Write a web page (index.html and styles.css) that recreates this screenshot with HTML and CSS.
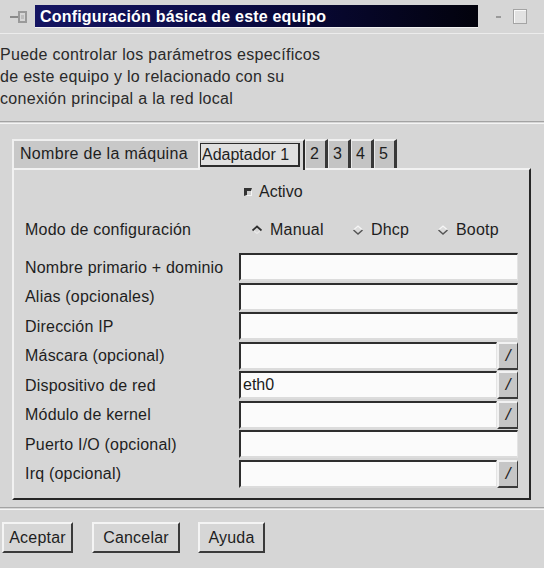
FILE: index.html
```html
<!DOCTYPE html>
<html lang="es">
<head>
<meta charset="utf-8">
<title>Configuración básica de este equipo</title>
<link rel="stylesheet" href="styles.css">
</head>
<body>
<div class="window">
  <div class="titlebar">
    <div class="menu-icon">
      <svg width="20" height="14" viewBox="0 0 20 14"><path d="M1 7h8" stroke="#8a8a8a" stroke-width="2"/><path d="M10 2h7v10h-7z" fill="none" stroke="#9a9a9a" stroke-width="2"/><path d="M12 5h3v4h-3z" fill="#bdbdbd"/></svg>
    </div>
    <div class="title">Configuración básica de este equipo</div>
    <div class="controls">
      <span class="minimize"></span>
      <span class="maximize"></span>
    </div>
  </div>

  <p class="desc">Puede controlar los parámetros específicos<br>de este equipo y lo relacionado con su<br>conexión principal a la red local</p>

  <div class="sep"></div>

  <div class="notebook">
    <div class="tabs">
      <div class="tab tab-name">Nombre de la máquina</div>
      <div class="tab tab-active"><span class="focus">Adaptador 1</span></div>
      <div class="tab tab-num">2</div>
      <div class="tab tab-num">3</div>
      <div class="tab tab-num">4</div>
      <div class="tab tab-num">5</div>
    </div>
    <div class="panel">
      <div class="check-row">
        <span class="checkbox"></span>
        <span>Activo</span>
      </div>
      <div class="form">
        <div class="label">Modo de configuración</div>
        <div class="radios">
          <span class="radio"><svg width="12" height="12" viewBox="0 0 12 12"><path d="M6 9.5 L10.5 5.5" stroke="#e8e8e8" stroke-width="1.3" fill="none"/><path d="M1.5 5.5 L6 9.5" stroke="#e8e8e8" stroke-width="1.3" fill="none"/><path d="M1.5 6.5 L6 2.5 L10.5 6.5" fill="none" stroke="#2e2e2e" stroke-width="1.7"/></svg>Manual</span>
          <span class="radio"><svg width="12" height="12" viewBox="0 0 12 12"><path d="M1.5 6 L6 2 L10.5 6 L6 10 Z" fill="#dcdcdc"/><path d="M1.5 6 L6 2 L10.5 6" fill="none" stroke="#f6f6f6" stroke-width="1.2"/><path d="M1.5 6 L6 10 L10.5 6" fill="none" stroke="#555" stroke-width="1.5"/></svg>Dhcp</span>
          <span class="radio"><svg width="12" height="12" viewBox="0 0 12 12"><path d="M1.5 6 L6 2 L10.5 6 L6 10 Z" fill="#dcdcdc"/><path d="M1.5 6 L6 2 L10.5 6" fill="none" stroke="#f6f6f6" stroke-width="1.2"/><path d="M1.5 6 L6 10 L10.5 6" fill="none" stroke="#555" stroke-width="1.5"/></svg>Bootp</span>
        </div>

        <div class="label">Nombre primario + dominio</div>
        <div class="field"><span class="entry"></span></div>

        <div class="label">Alias (opcionales)</div>
        <div class="field"><span class="entry"></span></div>

        <div class="label">Dirección IP</div>
        <div class="field"><span class="entry"></span></div>

        <div class="label">Máscara (opcional)</div>
        <div class="field"><span class="entry"></span><span class="drop">/</span></div>

        <div class="label">Dispositivo de red</div>
        <div class="field"><span class="entry">eth0</span><span class="drop">/</span></div>

        <div class="label">Módulo de kernel</div>
        <div class="field"><span class="entry"></span><span class="drop">/</span></div>

        <div class="label">Puerto I/O (opcional)</div>
        <div class="field"><span class="entry"></span></div>

        <div class="label">Irq (opcional)</div>
        <div class="field"><span class="entry"></span><span class="drop">/</span></div>
      </div>
    </div>
  </div>

  <div class="sep sep-bottom"></div>

  <div class="buttons">
    <button class="btn btn-ok">Aceptar</button>
    <button class="btn btn-cancel">Cancelar</button>
    <button class="btn btn-help">Ayuda</button>
  </div>
</div>
</body>
</html>
```

FILE: styles.css
```css
html, body {
  margin: 0;
  padding: 0;
  background: #d5d5d5;
}

body {
  font-family: "Liberation Sans", Arial, sans-serif;
  font-size: 16px;
  color: #1e1e1e;
}

.window {
  width: 544px;
  height: 568px;
  overflow: hidden;
  background: #d6d6d6;
  display: flex;
  flex-direction: column;
}

/* title bar */
.titlebar {
  height: 34px;
  display: flex;
  align-items: center;
  border-bottom: 1px solid #ececec;
  box-sizing: border-box;
}

.menu-icon {
  width: 35px;
  display: flex;
  justify-content: center;
  padding-left: 2px;
  box-sizing: border-box;
}

.title {
  width: 443px;
  height: 23px;
  box-sizing: border-box;
  padding-left: 5px;
  background: linear-gradient(90deg, #151562 0%, #0b0b45 45%, #02020c 100%);
  color: #ffffff;
  font-weight: bold;
  font-size: 16px;
  letter-spacing: 0.2px;
  line-height: 23px;
  border-bottom: 1px solid #f2f2f2;
  white-space: nowrap;
}

.controls {
  flex: 1;
  display: flex;
  align-items: center;
  padding-left: 18px;
  gap: 12px;
}

.minimize {
  width: 5px;
  height: 2px;
  background: #9a9a9a;
}

.maximize {
  width: 12px;
  height: 13px;
  border: 1px solid #a4a4a4;
  background: #e2e2e2;
  box-shadow: inset 1px 1px 0 #fafafa;
}

/* description */
.desc {
  margin: 10px 0 11px 0;
  line-height: 22px;
  letter-spacing: 0.3px;
  color: #2a2a2a;
  white-space: nowrap;
}

.sep {
  height: 1px;
  border-top: 1px solid #a3a3a3;
  border-bottom: 1px solid #f4f4f4;
}

/* notebook */
.notebook {
  margin: 13px 0 0 12px;
  width: 519px;
}

.tabs {
  display: flex;
  align-items: flex-end;
  height: 31px;
}

.tab {
  box-sizing: border-box;
  height: 29px;
  line-height: 26px;
  background: #c8c8c8;
  border-top: 2px solid #f0f0f0;
  border-left: 2px solid #f0f0f0;
  border-right: 2px solid #3a3a3a;
  padding: 0 6px;
  white-space: nowrap;
}

.tab-name {
  width: 186px;
  border-right: none;
  padding-left: 6px;
  letter-spacing: 0.3px;
}

.tab-active {
  height: 31px;
  width: 107px;
  background: #d6d6d6;
  border-top: 2px solid #f2f2f2;
  border-left: 2px solid #f2f2f2;
  border-right: 2px solid #2a2a2a;
  padding: 2px 3px 0 0;
  margin-bottom: -2px;
  position: relative;
}

.focus {
  display: block;
  height: 24px;
  line-height: 22px;
  box-sizing: border-box;
  border: 1px solid #2c2c2c;
  border-bottom-width: 2px;
  border-right-width: 2px;
  padding-left: 1px;
  background: #e0e0e0;
}

.tab-num {
  width: 23px;
  padding: 0 0 0 4px;
  border-left: 1px solid #e8e8e8;
  border-right: 3px solid #383838;
  background: #c4c4c4;
}

.panel {
  height: 332px;
  box-sizing: border-box;
  border-top: 2px solid #f2f2f2;
  border-left: 2px solid #f2f2f2;
  border-right: 2px solid #262626;
  border-bottom: 2px solid #262626;
  padding: 11px 0 0 11px;
}

.check-row {
  display: flex;
  align-items: center;
  gap: 7px;
  margin-left: 219px;
  height: 22px;
}

.checkbox {
  width: 8px;
  height: 8px;
  box-sizing: border-box;
  border-top: 3px solid #333;
  border-left: 3px solid #333;
  border-right: 1px solid #f4f4f4;
  border-bottom: 1px solid #f4f4f4;
  background: #cfcfcf;
}

.form {
  margin-top: 18px;
  display: grid;
  grid-template-columns: 214px 279px;
  grid-template-rows: 32px repeat(8, 29.5px);
  align-items: center;
}

.form .label {
  letter-spacing: 0.2px;
  white-space: nowrap;
}

.form .label:first-child {
  align-self: start;
}

.radios {
  align-self: start;
  display: flex;
  margin-left: 12px;
}

.radio {
  display: flex;
  align-items: center;
  gap: 7px;
  letter-spacing: 0.2px;
}

.radio:nth-child(1) { width: 101px; }
.radio:nth-child(2) { width: 85px; }

.field {
  display: flex;
  height: 28px;
  align-self: start;
}

.entry {
  flex: 1;
  box-sizing: border-box;
  background: #fbfbfb;
  border-top: 2px solid #2e2e2e;
  border-left: 2px solid #2e2e2e;
  border-bottom: 2px solid #dcdcdc;
  border-right: 1px solid #e4e4e4;
  padding-left: 2px;
  line-height: 24px;
  color: #1a1a1a;
}

.drop {
  width: 21px;
  box-sizing: border-box;
  background: #c6c6c6;
  border-top: 2px solid #f2f2f2;
  border-left: 2px solid #f2f2f2;
  border-right: 1px solid #3a3a3a;
  border-bottom: 2px solid #3a3a3a;
  text-align: center;
  font-size: 17px;
  font-style: italic;
  line-height: 23px;
  color: #222;
}

.sep-bottom {
  margin-top: 7px;
}

/* buttons */
.buttons {
  display: flex;
  margin-top: 12px;
  padding-left: 2px;
}

.btn {
  font-family: "Liberation Sans", Arial, sans-serif;
  font-size: 16px;
  color: #1e1e1e;
  height: 31px;
  padding: 0 2px;
  background: #d6d6d6;
  border-top: 2px solid #f4f4f4;
  border-left: 2px solid #f4f4f4;
  border-right: 2px solid #3a3a3a;
  border-bottom: 2px solid #3a3a3a;
  letter-spacing: 0.2px;
  white-space: nowrap;
}

.btn-ok { width: 71px; margin-right: 19px; }
.btn-cancel { width: 88px; margin-right: 18px; }
.btn-help { width: 67px; }
```
